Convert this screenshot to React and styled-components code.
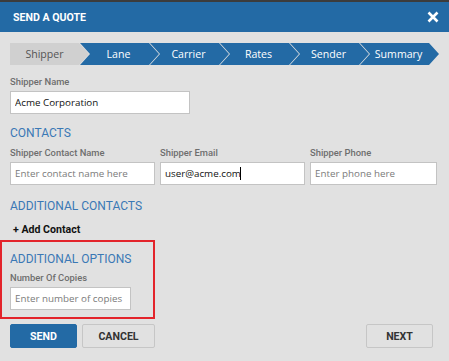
import React from 'react';
import styled, { createGlobalStyle } from 'styled-components';

const GlobalStyle = createGlobalStyle`
  html, body {
    margin: 0;
    padding: 0;
    background: #e1e1e1;
  }
  * { box-sizing: border-box; }
`;

const Dialog = styled.div`
  width: 449px;
  min-height: 361px;
  background: #e1e1e1;
  border-top: 2px solid #3c3c3c;
  font-family: Roboto, "Liberation Sans", sans-serif;
`;

const Header = styled.div`
  height: 30px;
  background: #236aa5;
  display: flex;
  align-items: center;
  justify-content: space-between;
  padding: 0 10px 0 13px;
`;

const Title = styled.div`
  color: #fff;
  font-size: 10.6px;
  font-weight: 700;
`;

const Close = styled.button`
  border: 0;
  background: none;
  padding: 0;
  width: 12px;
  height: 12px;
  display: flex;
  cursor: pointer;
`;

const Body = styled.div`
  padding: 11px 10px 0 10px;
`;

const Stepper = styled.div`
  display: flex;
  height: 22px;
  margin-bottom: 11px;
`;

const Step = styled.div`
  width: 79px;
  height: 22px;
  flex: none;
  margin-left: ${p => (p.$first ? 0 : -9)}px;
  display: flex;
  align-items: center;
  justify-content: center;
  padding-left: ${p => (p.$first ? 0 : 8)}px;
  padding-right: 10px;
  font-family: "Open Sans", sans-serif;
  font-size: 10.6px;
  color: ${p => (p.$active ? '#555' : '#fff')};
  background: ${p => (p.$active ? '#d0d0d0' : '#236aa5')};
  clip-path: ${p =>
    p.$first
      ? 'polygon(0 0, 69px 0, 79px 50%, 69px 100%, 0 100%)'
      : 'polygon(0 0, 69px 0, 79px 50%, 69px 100%, 0 100%, 10px 50%)'};
`;

const Label = styled.div`
  font-size: 9.4px;
  line-height: 12px;
  font-weight: 500;
  color: #6e6e6e;
  margin-bottom: 3px;
`;

const Field = styled.div`
  position: relative;
`;

const Input = styled.input`
  display: block;
  width: ${p => p.$width || '100%'};
  height: 23px;
  border: 1px solid #c3c3c3;
  background: #fff;
  padding: 0 4px;
  font-family: "Open Sans", sans-serif;
  font-size: 9.8px;
  color: #111;
  outline: none;
  &::placeholder { color: #7a7a7a; }
`;

const Caret = styled.span`
  position: absolute;
  top: 5px;
  left: ${p => p.$left}px;
  width: 1px;
  height: 13px;
  background: #000;
`;

const Heading = styled.div`
  font-size: 12px;
  line-height: 16px;
  font-weight: 400;
  color: #3a78b5;
  margin: ${p => p.$margin || '11px 0 6px'};
`;

const Row = styled.div`
  display: grid;
  grid-template-columns: 145px 145px 127px;
  gap: 5px;
`;

const AddContact = styled.div`
  font-size: 10.6px;
  font-weight: 700;
  color: #111;
  line-height: 12px;
  margin: 10px 0 0 3px;
`;

const Highlight = styled.div`
  margin: 4px 0 0 -10px;
  width: 155px;
  height: 79px;
  border: 2px solid #e3242b;
  padding: 0 0 0 8px;
`;

const Footer = styled.div`
  display: flex;
  gap: 5px;
  margin-top: 5px;
  padding-right: 6px;
`;

const Button = styled.button`
  height: 24px;
  width: ${p => p.$width}px;
  border-radius: 2px;
  border: 1px solid ${p => (p.$primary ? '#236aa5' : '#c6c6c6')};
  background: ${p => (p.$primary ? '#236aa5' : '#e1e1e1')};
  color: ${p => (p.$primary ? '#fff' : '#333')};
  font-family: Roboto, "Liberation Sans", sans-serif;
  font-size: 10.6px;
  font-weight: 700;
  padding: 0;
  margin-left: ${p => (p.$push ? 'auto' : '0')};
  cursor: pointer;
`;

const steps = ['Shipper', 'Lane', 'Carrier', 'Rates', 'Sender', 'Summary'];

export default function App() {
  return (
    <>
      <GlobalStyle />
      <Dialog>
        <Header>
          <Title>SEND A QUOTE</Title>
          <Close aria-label="close">
            <svg width="12" height="12" viewBox="0 0 12 12">
              <path d="M1.5 1.5 L10.5 10.5 M10.5 1.5 L1.5 10.5" stroke="#fff" strokeWidth="2.6" />
            </svg>
          </Close>
        </Header>
        <Body>
          <Stepper>
            {steps.map((s, i) => (
              <Step key={s} $first={i === 0} $active={i === 0}>{s}</Step>
            ))}
          </Stepper>

          <Label>Shipper Name</Label>
          <Input $width="180px" defaultValue="Acme Corporation" />

          <Heading>CONTACTS</Heading>
          <Row>
            <div>
              <Label>Shipper Contact Name</Label>
              <Input placeholder="Enter contact name here" />
            </div>
            <div>
              <Label>Shipper Email</Label>
              <Field>
                <Input defaultValue="user@acme.com" />
                <Caret $left={80} />
              </Field>
            </div>
            <div>
              <Label>Shipper Phone</Label>
              <Input placeholder="Enter phone here" />
            </div>
          </Row>

          <Heading $margin="13px 0 0">ADDITIONAL CONTACTS</Heading>
          <AddContact>+ Add Contact</AddContact>

          <Highlight>
            <Heading $margin="9px 0 5px">ADDITIONAL OPTIONS</Heading>
            <Label>Number Of Copies</Label>
            <Input $width="121px" placeholder="Enter number of copies" />
          </Highlight>

          <Footer>
            <Button $primary $width={67}>SEND</Button>
            <Button $width={73}>CANCEL</Button>
            <Button $width={67} $push>NEXT</Button>
          </Footer>
        </Body>
      </Dialog>
    </>
  );
}
